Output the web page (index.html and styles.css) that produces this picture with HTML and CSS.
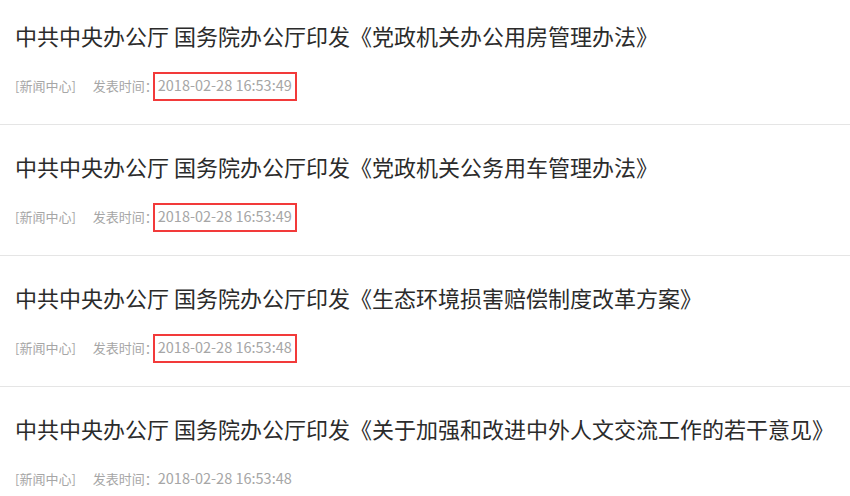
FILE: index.html
```html
<!DOCTYPE html>
<html lang="zh-CN">
  <head>
    <meta charset="UTF-8" />
    <meta name="viewport" content="width=device-width, initial-scale=1.0" />
    <title>新闻中心</title>
    <link rel="stylesheet" href="styles.css">
  </head>

  <body>
    <ul class="news-list">
      <li class="news-item">
        <div class="news-title">中共中央办公厅 国务院办公厅印发《党政机关办公用房管理办法》</div>
        <div class="news-meta">
          <span class="news-source">[新闻中心]</span>
          <span class="news-label">发表时间：</span><span class="news-time marked">2018-02-28 16:53:49</span>
        </div>
      </li>
      <li class="news-item">
        <div class="news-title">中共中央办公厅 国务院办公厅印发《党政机关公务用车管理办法》</div>
        <div class="news-meta">
          <span class="news-source">[新闻中心]</span>
          <span class="news-label">发表时间：</span><span class="news-time marked">2018-02-28 16:53:49</span>
        </div>
      </li>
      <li class="news-item">
        <div class="news-title">中共中央办公厅 国务院办公厅印发《生态环境损害赔偿制度改革方案》</div>
        <div class="news-meta">
          <span class="news-source">[新闻中心]</span>
          <span class="news-label">发表时间：</span><span class="news-time marked">2018-02-28 16:53:48</span>
        </div>
      </li>
      <li class="news-item">
        <div class="news-title">中共中央办公厅 国务院办公厅印发《关于加强和改进中外人文交流工作的若干意见》</div>
        <div class="news-meta">
          <span class="news-source">[新闻中心]</span>
          <span class="news-label">发表时间：</span><span class="news-time">2018-02-28 16:53:48</span>
        </div>
      </li>
    </ul>
  </body>
</html>
```

FILE: styles.css
```css
body {
  margin: 0;
  background: #fff;
  font-family: "Noto Sans CJK SC", "Noto Sans", sans-serif;
}

.news-list {
  margin: 0;
  padding: 0;
  list-style: none;
}

.news-item {
  padding: 25px 15px 28px;
  border-bottom: 1px solid #e5e5e5;
}

.news-item:first-child {
  padding-top: 19px;
}

.news-title {
  font-size: 22px;
  line-height: 32px;
  color: #2b2b2b;
  white-space: nowrap;
}

.news-meta {
  margin-top: 25px;
  font-size: 13px;
  line-height: 20px;
  color: #a6a6a6;
  white-space: nowrap;
}

.news-source {
  margin-right: 14px;
}

.news-time {
  position: relative;
  font-size: 14.5px;
  line-height: 1;
}

/* red highlight drawn over the timestamp */
.news-time.marked::after {
  content: "";
  position: absolute;
  left: -5px;
  right: -5px;
  top: -2px;
  bottom: -6px;
  border: 2px solid #f23a3a;
}
```
